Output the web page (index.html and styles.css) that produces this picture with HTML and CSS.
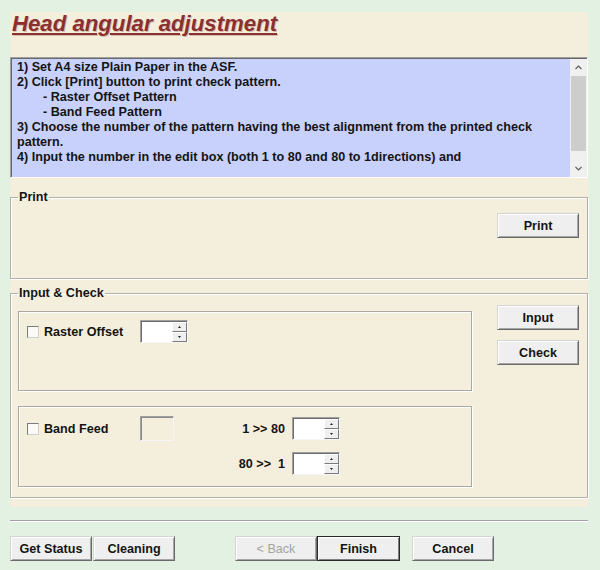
FILE: index.html
```html
<!DOCTYPE html>
<html>
<head>
<meta charset="utf-8">
<title>Head angular adjustment</title>
<link rel="stylesheet" href="styles.css">
</head>
<body>
<div class="panel">
  <h1 class="title">Head angular adjustment</h1>
  <div class="memo">
    <div class="memo-text">
      <div>1) Set A4 size Plain Paper in the ASF.</div>
      <div>2) Click [Print] button to print check pattern.</div>
      <div class="ind">- Raster Offset Pattern</div>
      <div class="ind">- Band Feed Pattern</div>
      <div>3) Choose the number of the pattern having the best alignment from the printed check</div>
      <div>pattern.</div>
      <div>4) Input the number in the edit box (both 1 to 80 and 80 to 1directions) and</div>
    </div>
    <div class="vscroll">
      <div class="sb-btn"><svg width="7" height="5" viewBox="0 0 7 5"><polyline points="0.5,4 3.5,1 6.5,4" fill="none" stroke="#606060" stroke-width="1.2"/></svg></div>
      <div class="sb-track"><div class="sb-thumb"></div></div>
      <div class="sb-btn"><svg width="7" height="5" viewBox="0 0 7 5"><polyline points="0.5,1 3.5,4 6.5,1" fill="none" stroke="#606060" stroke-width="1.2"/></svg></div>
    </div>
  </div>

  <fieldset class="group group-print">
    <legend>Print</legend>
    <div class="print-row">
      <button class="btn">Print</button>
    </div>
  </fieldset>

  <fieldset class="group group-input">
    <legend>Input &amp; Check</legend>
    <div class="input-row">
      <div class="boxes">
        <div class="box box1">
          <div class="cb-cell"><span class="cb"></span><span>Raster Offset</span></div>
          <div class="spin">
            <div class="spin-edit"></div>
            <div class="spin-btns">
              <div class="spin-btn"><svg width="3" height="2" viewBox="0 0 3 2"><polygon points="1.5,0 3,2 0,2" fill="#222"/></svg></div>
              <div class="spin-btn"><svg width="3" height="2" viewBox="0 0 3 2"><polygon points="0,0 3,0 1.5,2" fill="#222"/></svg></div>
            </div>
          </div>
        </div>
        <div class="box box2">
          <div class="cb-cell"><span class="cb"></span><span>Band Feed</span></div>
          <div class="edit-dis"></div>
          <div class="dir-label">1 &gt;&gt; 80</div>
          <div class="spin">
            <div class="spin-edit"></div>
            <div class="spin-btns">
              <div class="spin-btn"><svg width="3" height="2" viewBox="0 0 3 2"><polygon points="1.5,0 3,2 0,2" fill="#222"/></svg></div>
              <div class="spin-btn"><svg width="3" height="2" viewBox="0 0 3 2"><polygon points="0,0 3,0 1.5,2" fill="#222"/></svg></div>
            </div>
          </div>
          <div></div>
          <div></div>
          <div class="dir-label">80 &gt;&gt;&nbsp; 1</div>
          <div class="spin">
            <div class="spin-edit"></div>
            <div class="spin-btns">
              <div class="spin-btn"><svg width="3" height="2" viewBox="0 0 3 2"><polygon points="1.5,0 3,2 0,2" fill="#222"/></svg></div>
              <div class="spin-btn"><svg width="3" height="2" viewBox="0 0 3 2"><polygon points="0,0 3,0 1.5,2" fill="#222"/></svg></div>
            </div>
          </div>
        </div>
      </div>
      <div class="side-btns">
        <button class="btn">Input</button>
        <button class="btn">Check</button>
      </div>
    </div>
  </fieldset>
</div>

<div class="separator"></div>

<div class="footer">
  <button class="btn">Get Status</button>
  <button class="btn btn-adj">Cleaning</button>
  <button class="btn btn-back" disabled>&lt; Back</button>
  <button class="btn btn-finish">Finish</button>
  <button class="btn btn-cancel">Cancel</button>
</div>
</body>
</html>
```

FILE: styles.css
```css
html, body {
  margin: 0;
  padding: 0;
}
body {
  width: 600px;
  height: 570px;
  background: #e3f1e3;
  font-family: "Liberation Sans", Arial, sans-serif;
  font-weight: bold;
  font-size: 12.6px;
  color: #141414;
  overflow: hidden;
}

.panel {
  margin: 12px 0 0 10px;
  width: 578px;
  height: 495px;
  background: #f4efdc;
  display: flex;
  flex-direction: column;
}

.title {
  margin: 0;
  height: 45px;
  padding-left: 2px;
  font-size: 22.2px;
  font-style: italic;
  font-weight: bold;
  line-height: 24px;
  color: #8b2f2f;
  text-decoration: underline;
  text-decoration-thickness: 2px;
  text-underline-offset: 2px;
  text-shadow: 1px 1px 0 rgba(150, 90, 90, 0.35);
}

.memo {
  height: 121px;
  box-sizing: border-box;
  display: flex;
  background: #c8d0fc;
  border-top: 1px solid #a0a0a0;
  border-left: 1px solid #a0a0a0;
  border-right: 1px solid #ffffff;
  border-bottom: 1px solid #ffffff;
  box-shadow: inset 1px 1px 0 #696969;
}
.memo-text {
  flex: 1;
  padding: 2px 5px 0 6px;
  line-height: 15px;
  white-space: nowrap;
  overflow: hidden;
}
.memo-text .ind {
  padding-left: 26px;
}
.vscroll {
  width: 17px;
  margin: 1px 0 0 0;
  display: flex;
  flex-direction: column;
  background: #f0f0f0;
}
.sb-btn {
  height: 17px;
  display: flex;
  align-items: center;
  justify-content: center;
}
.sb-track {
  flex: 1;
  display: flex;
  flex-direction: column;
}
.sb-thumb {
  height: 75px;
  margin: 0 1px;
  background: #cdcdcd;
}

.group {
  margin: 0;
  min-width: 0;
  border: 1px solid #b3b0a6;
  box-shadow: inset 1px 1px 0 #ffffff, 1px 1px 0 #ffffff;
  padding: 0 8px 0 7px;
}
.group legend {
  padding: 0 1px;
  margin: 0;
  line-height: 15px;
}
.group-print {
  margin-top: 12px;
}
.print-row {
  display: flex;
  justify-content: flex-end;
  padding: 8px 0 40px 0;
}
.group-input {
  margin-top: 7px;
}
.input-row {
  display: flex;
  align-items: flex-start;
  padding-bottom: 10px;
}
.boxes {
  margin-top: 10px;
  display: flex;
  flex-direction: column;
  gap: 15px;
}
.box {
  width: 454px;
  height: 80px;
  box-sizing: border-box;
  border: 1px solid #a9a8a2;
  box-shadow: inset 1px 1px 0 #ffffff, 1px 1px 0 #ffffff;
  display: grid;
  align-items: center;
  align-content: start;
}
.box1 {
  grid-template-columns: 113px 48px;
  grid-template-rows: 23px;
  padding: 8px 0 0 8px;
}
.box2 {
  height: 81px;
  grid-template-columns: 113px 34px 118px 48px;
  grid-template-rows: 25px 23px;
  row-gap: 11px;
  padding: 9px 0 0 8px;
}
.cb-cell {
  display: flex;
  align-items: center;
}
.cb {
  width: 12px;
  height: 12px;
  box-sizing: border-box;
  margin-right: 5px;
  border: 1px solid;
  border-color: #7a7a7a #cfcfcf #cfcfcf #7a7a7a;
  background: #fbfaf6;
}
.dir-label {
  text-align: right;
  padding-right: 7px;
}
.spin {
  width: 48px;
  height: 23px;
  box-sizing: border-box;
  display: flex;
  background: #ffffff;
  border: 1px solid;
  border-color: #a0a0a0 #f6f6f6 #f6f6f6 #a0a0a0;
  box-shadow: inset 1px 1px 0 #6d6d6d;
}
.spin-edit {
  flex: 1;
}
.spin-btns {
  width: 15px;
  display: flex;
  flex-direction: column;
  padding: 1px 0 0 0;
}
.spin-btn {
  flex: 1;
  box-sizing: border-box;
  background: #efefef;
  border: 1px solid;
  border-color: #ffffff #7a7a7a #7a7a7a #ffffff;
  display: flex;
  align-items: center;
  justify-content: center;
}
.edit-dis {
  width: 34px;
  height: 25px;
  box-sizing: border-box;
  border: 1px solid;
  border-color: #a0a0a0 #f6f6f6 #f6f6f6 #a0a0a0;
  box-shadow: inset 1px 1px 0 #8a8a8a;
}
.side-btns {
  margin: 4px 0 0 25px;
  display: flex;
  flex-direction: column;
  gap: 10px;
}

.btn {
  width: 82px;
  height: 25px;
  box-sizing: border-box;
  padding: 0;
  margin: 0;
  font-family: "Liberation Sans", Arial, sans-serif;
  font-weight: bold;
  font-size: 12.6px;
  color: #141414;
  background: #efefef;
  border: 1px solid;
  border-color: #d4d4d4 #6a6a6a #6a6a6a #d4d4d4;
  box-shadow: inset 1px 1px 0 #ffffff, inset -1px -1px 0 #a6a6a6;
}

.separator {
  margin: 13px 0 0 10px;
  width: 578px;
  border-top: 1px solid #a0a0a0;
  border-bottom: 1px solid #ffffff;
}

.footer {
  margin: 14px 0 0 10px;
  display: flex;
}
.btn-adj {
  margin-left: 1px;
}
.btn-back {
  margin-left: 60px;
  color: #a3a3a3;
  font-weight: normal;
}
.btn-finish {
  width: 83px;
  margin-left: 0;
  border-color: #2a2a2a;
  box-shadow: inset 1px 1px 0 #ffffff, inset -1px -1px 0 #808080;
}
.btn-cancel {
  margin-left: 12px;
}
```
